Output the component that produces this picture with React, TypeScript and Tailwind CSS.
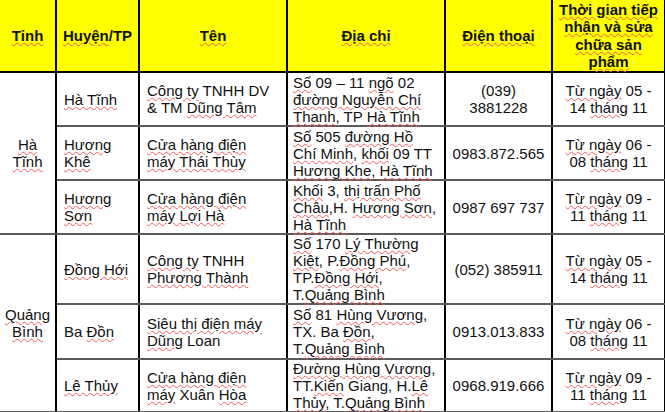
import React from 'react';

type Lines = string[];

// words in {braces} get the red spell-check squiggle
function Line({ text }: { text: string }) {
  const parts = text.split(/(\{[^}]*\})/).filter(Boolean);
  return <span className="block whitespace-nowrap">{parts.map((p, i) => p.startsWith('{') ? <span key={i} className="underline decoration-wavy decoration-[#f25a5a] decoration-1 underline-offset-[1px]">{p.slice(1, -1)}</span> : <span key={i}>{p}</span>)}</span>;
}

const Cell = ({ lines }: { lines: Lines }) => <>{lines.map((l, i) => <Line key={i} text={l} />)}</>;

const header: Lines[] = [['{Tỉnh}'], ['{Huyện}/TP'], ['{Tên}'], ['{Địa chỉ}'], ['{Điện thoại}'], ['{Thời gian tiếp}', '{nhận và sửa}', '{chữa sản}', '{phẩm}']];

type Row = { h: string; district: Lines; name: Lines; addr: Lines; phone: Lines; time: Lines };

const groups: { province: Lines; rows: Row[] }[] = [
  {
    province: ['{Hà}', '{Tĩnh}'],
    rows: [
      { h: 'h-[54px]', district: ['{Hà Tĩnh}'], name: ['{Công ty} TNHH DV', '& TM {Dũng Tâm}'], addr: ['{Số} 09 – 11 {ngõ} 02', '{đường Nguyễn Chí}', '{Thanh}, TP {Hà Tĩnh}'], phone: ['(039)', '3881228'], time: ['{Từ ngày} 05 -', '14 {tháng} 11'] },
      { h: 'h-[54px]', district: ['{Hương}', '{Khê}'], name: ['{Cửa hàng điện}', '{máy Thái Thùy}'], addr: ['{Số} 505 {đường Hồ}', '{Chí Minh}, {khối} 09 TT', '{Hương Khe}, {Hà Tĩnh}'], phone: ['0983.872.565'], time: ['{Từ ngày} 06 -', '08 {tháng} 11'] },
      { h: 'h-[54px]', district: ['{Hương}', '{Sơn}'], name: ['{Cửa hàng điện}', '{máy Lợi Hà}'], addr: ['{Khối} 3, {thị trấn Phố}', '{Châu},H. {Hương Sơn},', '{Hà Tĩnh}'], phone: ['0987 697 737'], time: ['{Từ ngày} 09 -', '11 {tháng} 11'] },
    ],
  },
  {
    province: ['{Quảng}', '{Bình}'],
    rows: [
      { h: 'h-[70px]', district: ['{Đồng Hới}'], name: ['{Công ty} TNHH', '{Phương Thành}'], addr: ['{Số} 170 {Lý Thường}', '{Kiệt}, P.{Đồng Phú},', 'TP.{Đồng Hới},', 'T.{Quảng Bình}'], phone: ['(052) 385911'], time: ['{Từ ngày} 05 -', '14 {tháng} 11'] },
      { h: 'h-[55px]', district: ['Ba {Đồn}'], name: ['{Siêu thị điện máy}', '{Dũng} Loan'], addr: ['{Số} 81 {Hùng Vương},', 'TX. Ba {Đồn},', 'T.{Quảng Bình}'], phone: ['0913.013.833'], time: ['{Từ ngày} 06 -', '08 {tháng} 11'] },
      { h: 'h-[52px]', district: ['{Lê Thủy}'], name: ['{Cửa hàng điện}', '{máy} Xuân {Hòa}'], addr: ['{Đường Hùng Vương},', 'TT.{Kiến} Giang, H.{Lê}', '{Thủy}, T.{Quảng Bình}'], phone: ['0968.919.666'], time: ['{Từ ngày} 09 -', '11 {tháng} 11'] },
    ],
  },
];

const td = 'border-r-2 border-b-2 border-r-black border-b-[#5a5a5a] align-middle p-0';

export default function App() {
  return (
    <div className="w-[665px] h-[412px] overflow-hidden bg-white text-[#111] font-['Liberation_Sans',Arial,sans-serif] text-[15px] leading-[17px]">
      <table className="table-fixed border-collapse w-[665px]">
        <colgroup>
          <col className="w-[56px]" />
          <col className="w-[83px]" />
          <col className="w-[148px]" />
          <col className="w-[158px]" />
          <col className="w-[107px]" />
          <col className="w-[113px]" />
        </colgroup>
        <thead>
          <tr className="h-[72px] bg-[#ffff00] font-bold leading-[17.5px]">
            {header.map((h, i) => <th key={i} className="border-r-2 border-b-2 border-black align-middle text-center p-0 font-bold"><Cell lines={h} /></th>)}
          </tr>
        </thead>
        <tbody>
          {groups.map((g, gi) => g.rows.map((r, ri) => (
            <tr key={`${gi}-${ri}`} className={r.h}>
              {ri === 0 && <td rowSpan={g.rows.length} className={`${td} text-center`}><Cell lines={g.province} /></td>}
              <td className={`${td} pl-[7px]`}><Cell lines={r.district} /></td>
              <td className={`${td} pl-[7px]`}><Cell lines={r.name} /></td>
              <td className={`${td} pl-[5px]`}><Cell lines={r.addr} /></td>
              <td className={`${td} text-center`}><Cell lines={r.phone} /></td>
              <td className={`${td} text-center`}><Cell lines={r.time} /></td>
            </tr>
          )))}
        </tbody>
      </table>
    </div>
  );
}
